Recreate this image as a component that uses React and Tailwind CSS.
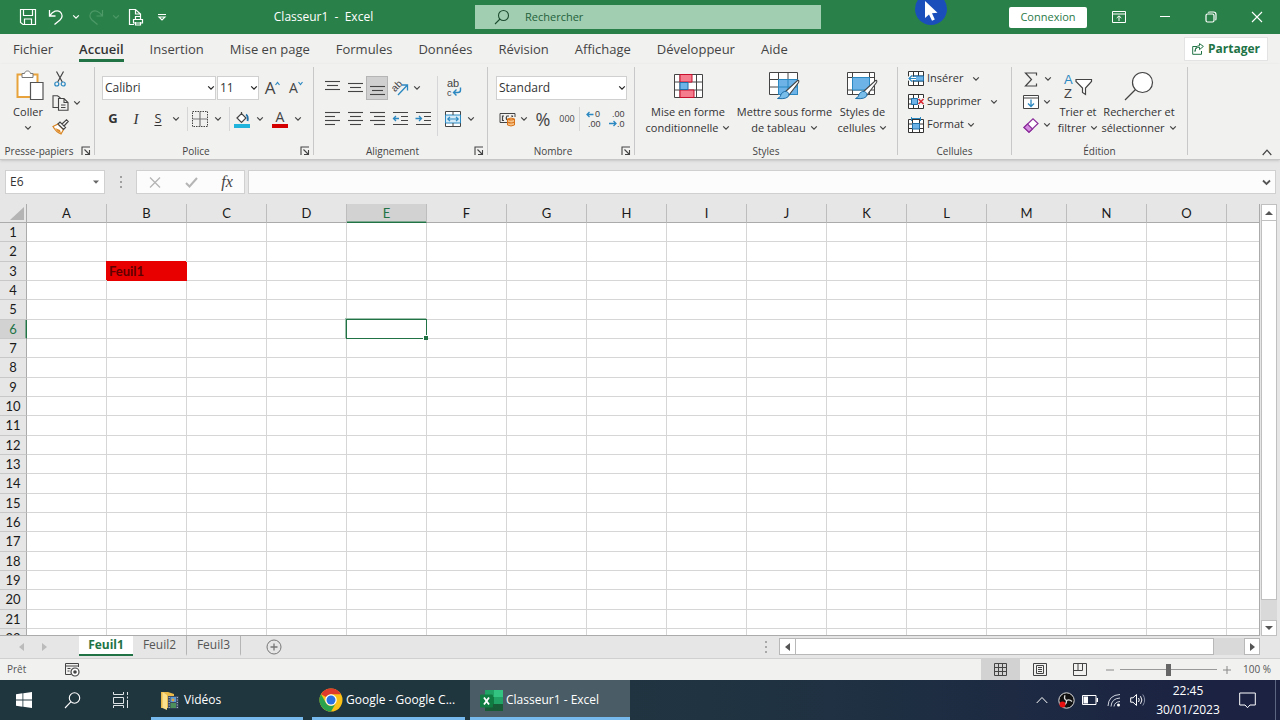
import React from "react";

const COLUMNS = ["A", "B", "C", "D", "E", "F", "G", "H", "I", "J", "K", "L", "M", "N", "O"];
const ROWS = Array.from({ length: 22 }, (_, i) => i + 1);
const TABS = ["Fichier", "Accueil", "Insertion", "Mise en page", "Formules", "Données", "Révision", "Affichage", "Développeur", "Aide"];

function Svg({ w = 20, h = 20, className = "", children }) {
  return (
    <svg width={w} height={h} viewBox={`0 0 ${w} ${h}`} fill="none" stroke="#444" className={`shrink-0 ${className}`} aria-hidden="true">
      {children}
    </svg>
  );
}

function Chevron({ color = "#444" }) {
  return (
    <Svg w={8} h={6}>
      <path d="M1.2 1.3L4 4.2L6.8 1.3" stroke={color} strokeWidth="1.2" />
    </Svg>
  );
}

function Tool({ label, className = "w-[22px]", children }) {
  return (
    <button type="button" aria-label={label} className={`flex h-6 shrink-0 items-center justify-center ${className}`}>
      {children}
    </button>
  );
}

function Drop({ label, className = "w-4" }) {
  return (
    <Tool label={label} className={className}>
      <Chevron />
    </Tool>
  );
}

function Select({ label, value, className }) {
  return (
    <div className={`relative h-6 shrink-0 ${className}`}>
      <select aria-label={label} className="block h-full w-full appearance-none border border-[#d0d0d0] bg-white pl-[2px] text-[12px] text-[#333] outline-none">
        <option>{value}</option>
      </select>
      <span className="pointer-events-none absolute inset-y-0 right-px flex items-center">
        <Chevron color="#222" />
      </span>
    </div>
  );
}

function Group({ label, launcher, className, children }) {
  return (
    <section className={`flex shrink-0 flex-col pt-[3px] pb-1 ${className}`}>
      <div className="flex flex-1 flex-col border-r border-[#c8c8c8]">
        <div className="flex flex-1">{children}</div>
        <div className="-mb-1 flex h-4 items-center">
          <h2 className="flex-1 text-center text-[10px] leading-4 font-normal whitespace-nowrap text-[#444]">{label}</h2>
          {launcher && (
            <button type="button" aria-label={`Options ${label}`} className="flex w-4 justify-center">
              <Svg w={10} h={10}>
                <path d="M1 9V1H9M3.5 3.5L8 8M8.5 4V8.5H4" strokeWidth="1.1" />
              </Svg>
            </button>
          )}
        </div>
      </div>
    </section>
  );
}

function BigButton({ lines, drop, className, children }) {
  return (
    <button type="button" className={`flex h-[72px] shrink-0 flex-col items-center text-[11px] leading-4 whitespace-nowrap text-[#333] ${className}`}>
      <span className="flex h-[37px] items-center">{children}</span>
      <span>{lines[0]}</span>
      <span className="flex h-4 items-center gap-1">
        {lines[1]}
        {drop && <Chevron />}
      </span>
    </button>
  );
}

const HLines = ({ rows }) => (
  <Svg w={16} h={16}>
    {rows.map(([y, x1, x2]) => (
      <path key={y} d={`M${x1} ${y}.5H${x2}`} strokeWidth="1.1" />
    ))}
  </Svg>
);

function TitleBar() {
  return (
    <header className="relative flex h-[34px] shrink-0 items-center bg-[#2a8049] text-white">
      <div className="flex flex-1 items-center pl-4">
        <Tool label="Enregistrer" className="w-6">
          <Svg w={18} h={18}>
            <path d="M1.5 1.5H16.5V16.5H4L1.5 14.5ZM4.5 1.5V7.5H13.5V1.5M5.5 16.5V11H12.5V16.5" stroke="#fff" strokeWidth="1.2" />
          </Svg>
        </Tool>
        <Tool label="Annuler" className="w-8">
          <Svg w={16} h={18}>
            <path d="M1.5 2V8H7.5M1.8 7.6C5 3.2 9.2 1.6 12 3.8C15 6.2 14.6 9.5 12 12L6.5 16.5" stroke="#fff" strokeWidth="1.3" />
          </Svg>
        </Tool>
        <button type="button" aria-label="Historique d'annulation" className="w-2"><Chevron color="#fff" /></button>
        <Tool label="Rétablir" className="w-8">
          <Svg w={16} h={18}>
            <path d="M14.5 2V8H8.5M14.2 7.6C11 3.2 6.8 1.6 4 3.8C1 6.2 1.4 9.5 4 12L9.5 16.5" stroke="#4d9968" strokeWidth="1.2" />
          </Svg>
        </Tool>
        <button type="button" aria-label="Historique de rétablissement" className="w-2"><Chevron color="#4d9968" /></button>
        <Tool label="Aperçu et impression" className="w-8">
          <Svg w={16} h={18}>
            <path d="M6 16.5H1.5V1.5H7.5L12.5 6V8M7.5 1.5V6H12.5M5.5 11.5H14.5V15H5.5ZM7.5 11.5V8.5H12.5V11.5M7.5 14V17H12.5V14" stroke="#fff" strokeWidth="1.2" />
          </Svg>
        </Tool>
        <Tool label="Personnaliser" className="w-5">
          <Svg w={10} h={8}>
            <path d="M1 1.5H9M2 4L5 7L8 4Z" stroke="#fff" strokeWidth="1.1" />
          </Svg>
        </Tool>
        <h1 className="flex-1 text-center text-[12px] font-normal whitespace-pre">Classeur1  -  Excel</h1>
      </div>
      <label className="flex h-6 w-[346px] items-center bg-[#a1ceb0]">
        <span className="flex w-[50px] justify-center pl-1">
          <Svg w={16} h={16}>
            <circle cx="9.5" cy="6.5" r="5" stroke="#1d4d30" strokeWidth="1.1" />
            <path d="M6 10L1 15" stroke="#1d4d30" strokeWidth="1.1" />
          </Svg>
        </span>
        <input aria-label="Rechercher" placeholder="Rechercher" className="min-w-0 flex-1 bg-transparent text-[11px] outline-none placeholder:text-[#24613c]" />
      </label>
      <div className="flex flex-1 items-center justify-end">
        <button type="button" className="mr-[9px] h-[21px] w-[78px] rounded-xs bg-white text-[11px] leading-5 text-[#2a7a48]">Connexion</button>
        <Tool label="Options du ruban" className="w-[46px]">
          <Svg w={14} h={12}>
            <path d="M.5 .5H13.5V11.5H.5ZM.5 3H13.5M7 10V5M4.7 7L7 4.8L9.3 7" stroke="#fff" />
          </Svg>
        </Tool>
        <Tool label="Réduire" className="w-[46px]">
          <Svg w={12} h={12}><path d="M1 5.5H11" stroke="#fff" /></Svg>
        </Tool>
        <Tool label="Niveau inférieur" className="w-[46px]">
          <Svg w={12} h={12}>
            <rect x="1" y="3" width="8" height="8" rx="1.5" stroke="#fff" strokeWidth="1.2" />
            <path d="M3 1.5C3.4 1 4 1 5 1H8.5C10.2 1 11 1.8 11 3.5V7.5C11 8.4 11 8.8 10.5 9.2" stroke="#fff" strokeWidth="1.2" />
          </Svg>
        </Tool>
        <Tool label="Fermer" className="w-[46px]">
          <Svg w={12} h={12}><path d="M1 1L11 11M11 1L1 11" stroke="#fff" strokeWidth="1.1" /></Svg>
        </Tool>
      </div>
      <svg width="34" height="26" viewBox="0 0 34 26" className="pointer-events-none absolute top-0 left-[914px]" aria-hidden="true">
        <circle cx="17" cy="9" r="16" fill="#1a4fbb" />
        <path d="M11 1V18L15 14.5L18 20.8L20.8 19.5L18 13.3L23.5 12.8Z" fill="#fff" />
      </svg>
    </header>
  );
}

function RibbonTabs() {
  return (
    <nav className="flex h-[30px] shrink-0 items-start justify-between bg-[#f1f1f0] pr-3">
      <div className="flex gap-[26px] pl-[13px]">
        {TABS.map((t) =>
          t === "Accueil" ? (
            <button key={t} type="button" className="h-7 border-b-[3px] border-[#217346] pt-[3px] text-[13px] leading-6 font-semibold text-[#333]">{t}</button>
          ) : (
            <button key={t} type="button" className="h-7 border-b-[3px] border-transparent pt-[3px] text-[13px] leading-6 whitespace-nowrap text-[#444]">{t}</button>
          )
        )}
      </div>
      <button type="button" className="mt-[3px] flex h-6 items-center gap-1 border border-[#e3e3e3] bg-white px-[7px] text-[12px] font-bold text-[#217346]">
        <Svg w={12} h={12}>
          <path d="M5 3.5H.7V11.3H9.5V8M3 8.5C3.3 5.5 5 4.2 7.5 4.2V6.6L11.4 3.4L7.5 .6V2.6C4.8 2.8 3.2 4.8 3 8.5Z" stroke="#217346" />
        </Svg>
        Partager
      </button>
    </nav>
  );
}

function Clipboard() {
  return (
    <Group label="Presse-papiers" launcher className="w-[95px]">
      <div className="flex pl-[7px]">
        <button type="button" className="flex h-[72px] w-[42px] flex-col items-center text-[11px] leading-4 text-[#333]">
          <span className="flex h-[37px] items-center pl-1">
            <Svg w={28} h={31}>
              <path d="M1.5 4.5H21.5V27H1.5Z" fill="#fff" stroke="#e8a33d" strokeWidth="2" />
              <path d="M6 3.5H8.5C9 1.6 10 1 11.5 1S14 1.6 14.5 3.5H17V7.5H6Z" fill="#fff" stroke="#777" />
              <path d="M14.5 12.5H27V29.5H14.5Z" fill="#fff" stroke="#555" strokeWidth="1.2" />
            </Svg>
          </span>
          <span>Coller</span>
          <span className="flex h-4 items-center"><Chevron /></span>
        </button>
        <div className="flex flex-col">
          <Tool label="Couper">
            <Svg w={12} h={16}>
              <path d="M2.5 .5L8.3 11M9.5 .5L3.7 11" strokeWidth="1.2" />
              <circle cx="2.8" cy="13" r="2" stroke="#2b88c0" strokeWidth="1.2" />
              <circle cx="9.2" cy="13" r="2" stroke="#2b88c0" strokeWidth="1.2" />
            </Svg>
          </Tool>
          <div className="flex">
            <Tool label="Copier">
              <Svg w={17} h={16}>
                <path d="M7 12.5H1V.8H5.5L8.5 3M6.5 3.5H12L16 7.5V15.3H6.5ZM12 3.5V7.5H16M9 10H13.5M9 12.5H13.5" strokeWidth="1.1" />
              </Svg>
            </Tool>
            <Drop label="Options de copie" className="w-3" />
          </div>
          <Tool label="Reproduire la mise en forme">
            <Svg w={17} h={16}>
              <path d="M1 7.5L6 5L11.5 10.5L9 15Q4 13 1 7.5Z" fill="#fff" stroke="#d88420" strokeWidth="1.2" />
              <path d="M3 9L8 11L9 14.5Q5 12.5 3 9Z" fill="#e08a25" stroke="none" />
              <path d="M6 5L8 3L13.5 8.5L11.5 10.5ZM10 5L14.5 .8L16.2 2.5L12 7" fill="#fff" strokeWidth="1.2" />
            </Svg>
          </Tool>
        </div>
      </div>
    </Group>
  );
}

function FontGroup() {
  return (
    <Group label="Police" launcher className="w-[219px]">
      <div className="flex flex-col gap-[7px] pt-[9px] pl-[7px]">
        <div className="flex">
          <Select label="Police" value="Calibri" className="mr-px w-[114px]" />
          <Select label="Taille de police" value="11" className="w-[42px]" />
          <Tool label="Augmenter la taille" className="w-[27px]">
            <span className="text-[17px] leading-5 text-[#444]">A</span>
            <Svg w={5} h={14}><path d="M.5 4L2.5 1.5L4.5 4" stroke="#2b88c0" strokeWidth="1.2" /></Svg>
          </Tool>
          <Tool label="Réduire la taille" className="w-[20px]">
            <span className="text-[14px] leading-5 text-[#444]">A</span>
            <Svg w={5} h={14}><path d="M.5 1L2.5 3.5L4.5 1" stroke="#2b88c0" strokeWidth="1.2" /></Svg>
          </Tool>
        </div>
        <div className="flex items-center text-[13px] text-[#333]">
          <Tool label="Gras"><b>G</b></Tool>
          <Tool label="Italique" className="w-6"><i className="font-['Liberation_Serif',serif] text-[15px]">I</i></Tool>
          <Tool label="Souligné" className="w-5"><span className="underline underline-offset-2">S</span></Tool>
          <Drop label="Options de soulignement" />
          <span className="mx-[2px] h-6 w-[2px] border-r border-[#d6d6d6]" />
          <Tool label="Bordures" className="w-5">
            <Svg w={16} h={16}>
              <path d="M.5 .5H15.5V15.5H.5Z" strokeDasharray="1.5 1" />
              <path d="M8 .5V15.5M.5 8H15.5" strokeWidth="1.2" stroke="#777" />
            </Svg>
          </Tool>
          <Drop label="Options de bordure" />
          <span className="mx-[2px] h-6 w-[2px] border-r border-[#d6d6d6]" />
          <Tool label="Couleur de remplissage" className="w-5">
            <Svg w={16} h={17}>
              <path d="M3 7L7.5 2.5L12 7L7.5 11.5ZM7.5 4V1" fill="#fff" strokeWidth="1.2" />
              <path d="M12 3.5Q14.5 5 13.5 10" stroke="#1f6fa8" strokeWidth="1.8" />
              <path d="M0 13H16V17H0Z" fill="#20b4dc" stroke="none" />
            </Svg>
          </Tool>
          <Drop label="Couleurs de remplissage" />
          <Tool label="Couleur de police" className="w-6 flex-col">
            <span className="text-[14px] leading-[14px] text-[#444]">A</span>
            <span className="h-1 w-4 bg-[#d40000]" />
          </Tool>
          <Drop label="Couleurs de police" className="w-3" />
        </div>
      </div>
    </Group>
  );
}

function AlignGroup() {
  return (
    <Group label="Alignement" launcher className="w-[174px]">
      <div className="flex pt-[9px] pl-[7px]">
        <div className="flex w-[115px] flex-col gap-[7px]">
          <div className="flex">
            <Tool label="Aligner en haut"><HLines rows={[[1, 1, 16], [5, 3, 14], [9, 1, 16]]} /></Tool>
            <Tool label="Aligner au centre" className="w-[23px]"><HLines rows={[[3, 1, 16], [7, 3, 14], [11, 1, 16]]} /></Tool>
            <Tool label="Aligner en bas" className="w-[22px] border border-[#b5b5b5] bg-[#d0d0d0]"><HLines rows={[[6, 1, 16], [10, 3, 14], [14, 1, 16]]} /></Tool>
            <Tool label="Orientation" className="w-6">
              <Svg w={20} h={20}>
                <text x="2" y="13" transform="rotate(-45 5 10)" fontFamily="Liberation Sans" fontSize="10" fill="#444" stroke="none">ab</text>
                <path d="M8 17L17 7.5M12 7H17.5V12.5" stroke="#2b88c0" strokeWidth="1.3" />
              </Svg>
            </Tool>
            <Drop label="Options d'orientation" className="w-[10px]" />
          </div>
          <div className="flex">
            <Tool label="Aligner à gauche"><HLines rows={[[1, 1, 16], [5, 1, 11], [9, 1, 16], [13, 1, 11]]} /></Tool>
            <Tool label="Centrer" className="w-[23px]"><HLines rows={[[1, 1, 16], [5, 3, 14], [9, 1, 16], [13, 3, 14]]} /></Tool>
            <Tool label="Aligner à droite"><HLines rows={[[1, 1, 16], [5, 5, 16], [9, 1, 16], [13, 5, 16]]} /></Tool>
            <Tool label="Diminuer le retrait" className="w-6">
              <Svg w={16} h={16}>
                <path d="M1 1.5H16M9 5.5H16M9 9.5H16M1 13.5H16" strokeWidth="1.1" />
                <path d="M1.5 7.5H7M4 5L1.5 7.5L4 10" stroke="#2b88c0" strokeWidth="1.3" />
              </Svg>
            </Tool>
            <Tool label="Augmenter le retrait" className="w-[22px]">
              <Svg w={16} h={16}>
                <path d="M1 1.5H16M9 5.5H16M9 9.5H16M1 13.5H16" strokeWidth="1.1" />
                <path d="M.5 7.5H6.5M4 5L6.5 7.5L4 10" stroke="#2b88c0" strokeWidth="1.3" />
              </Svg>
            </Tool>
          </div>
        </div>
        <span className="mr-1 h-[60px] w-[2px] border-r border-[#d6d6d6]" />
        <div className="flex flex-col gap-[7px]">
          <Tool label="Renvoyer à la ligne automatiquement" className="w-6">
            <Svg w={16} h={20}>
              <text x="1" y="9" fontFamily="Liberation Sans" fontSize="11" fill="#444" stroke="none">ab</text>
              <text x="1" y="18" fontFamily="Liberation Sans" fontSize="9" fill="#444" stroke="none">c</text>
              <path d="M14.5 9.5V12Q14.5 14.5 12 14.5H8M10.5 11.5L7.5 14.5L10.5 17.5" stroke="#2b88c0" strokeWidth="1.4" />
            </Svg>
          </Tool>
          <div className="flex">
            <Tool label="Fusionner et centrer">
              <Svg w={16} h={16}>
                <path d="M.5 .5H15.5V15.5H.5Z" fill="#fff" />
                <path d="M.5 4H15.5V12H.5Z" fill="#d5ecf8" stroke="#2b88c0" />
                <path d="M8 .5V4M8 12V15.5" />
                <path d="M3 8H13M5 5.8L2.8 8L5 10.2M11 5.8L13.2 8L11 10.2" stroke="#2b88c0" strokeWidth="1.2" />
              </Svg>
            </Tool>
            <Drop label="Options de fusion" className="w-[14px]" />
          </div>
        </div>
      </div>
    </Group>
  );
}

function NumberGroup() {
  return (
    <Group label="Nombre" launcher className="w-[147px]">
      <div className="flex flex-col gap-[7px] pt-[9px] pl-2">
        <Select label="Format de nombre" value="Standard" className="w-[131px]" />
        <div className="flex items-center text-[#444]">
          <Tool label="Format comptable">
            <Svg w={17} h={16}>
              <path d="M8 11.5H1V2.5H16V6" />
              <path d="M5 5H3.5V9.5H5M10 5H8Q6.5 7 8 9M12 5H13.5V6" strokeWidth="1.2" />
              <path d="M8.5 8V14Q12 16 15.5 14V8Q12 6 8.5 8Z" fill="#f6c489" stroke="#d9731a" />
              <path d="M8.5 8Q12 10 15.5 8M8.5 11Q12 13 15.5 11" stroke="#d9731a" strokeWidth="1.2" />
            </Svg>
          </Tool>
          <Drop label="Devises" className="w-3" />
          <Tool label="Style de pourcentage" className="w-[26px] text-[18px]">%</Tool>
          <Tool label="Style de milliers" className="w-[22px] text-[9px]">000</Tool>
          <span className="mr-[2px] h-6 w-[2px] border-r border-[#d6d6d6]" />
          <Tool label="Ajouter une décimale" className="w-6">
            <Svg w={18} h={20}>
              <text x="10" y="8" fontFamily="Liberation Sans" fontSize="9" fill="#444" stroke="none">0</text>
              <text x="3" y="18" fontFamily="Liberation Sans" fontSize="9" fill="#444" stroke="none">.00</text>
              <path d="M2 5.5H8.5M4.5 3L2 5.5L4.5 8" stroke="#2b88c0" strokeWidth="1.3" />
            </Svg>
          </Tool>
          <Tool label="Réduire les décimales">
            <Svg w={18} h={20}>
              <text x="4" y="8" fontFamily="Liberation Sans" fontSize="9" fill="#444" stroke="none">.00</text>
              <text x="9" y="18" fontFamily="Liberation Sans" fontSize="9" fill="#444" stroke="none">.0</text>
              <path d="M1 14.5H8M5.5 12L8 14.5L5.5 17" stroke="#2b88c0" strokeWidth="1.3" />
            </Svg>
          </Tool>
        </div>
      </div>
    </Group>
  );
}

const Brush = () => (
  <>
    <path d="M28.5 8.5Q30.5 8 29.5 10.5L20 23L16 20Z" fill="#fff" strokeWidth="1.1" />
    <path d="M15.5 19.5Q19.5 19 20 23Q19 27.5 8.5 26.5Q12 25 12 22.5Q13 20 15.5 19.5Z" fill="#79bdea" stroke="#1f6fa8" />
  </>
);

function StylesGroup() {
  return (
    <Group label="Styles" className="w-[263px]">
      <div className="flex pl-2">
        <BigButton lines={["Mise en forme", "conditionnelle"]} drop className="w-[90px]">
          <Svg w={29} h={24}>
            <path d="M.5 .5H28.5V23.5H.5ZM6 .5V23.5M22.5 .5V23.5M.5 8H28.5M.5 16H28.5" fill="#fff" />
            <path d="M6 .5H18V8H6ZM6 16H20V23.5H6Z" fill="#f47c8c" stroke="#c8102e" />
            <path d="M6 8.5H14V15.5H6Z" fill="#6db3e8" stroke="#1f6fa8" />
          </Svg>
        </BigButton>
        <BigButton lines={["Mettre sous forme", "de tableau"]} drop className="w-[103px]">
          <Svg w={31} h={28}>
            <path d="M.5 .5H28.5V22.5H.5ZM.5 7.5H28.5M.5 15H28.5M9.5 .5V22.5M19 .5V22.5" fill="#fff" />
            <path d="M9.5 7.5H28.5V22.5H9.5Z" fill="#6db3e8" stroke="#2b88c0" />
            <path d="M19 7.5V22.5M9.5 15H28.5" stroke="#2b88c0" />
            <Brush />
          </Svg>
        </BigButton>
        <BigButton lines={["Styles de", "cellules"]} drop className="w-[53px]">
          <Svg w={31} h={28}>
            <path d="M.5 .5H27.5V22.5H.5ZM.5 5.5H27.5M5.5 .5V22.5M22.5 .5V22.5M.5 18H27.5" fill="#fff" />
            <path d="M5.5 5.5H22.5V18H5.5Z" fill="#6db3e8" stroke="#2b88c0" />
            <Brush />
          </Svg>
        </BigButton>
      </div>
    </Group>
  );
}

const MiniGrid = () => <path d="M.5 .5H15.5V14.5H.5ZM.5 5H15.5M.5 10H15.5M5.5 .5V14.5M10.5 .5V14.5" fill="#fff" stroke="#333" />;

function CellsGroup() {
  return (
    <Group label="Cellules" className="w-[114px]">
      <div className="flex flex-col pl-[10px] text-[11px] text-[#333]">
        <button type="button" className="flex h-[23px] items-center gap-[3px]">
          <Svg w={16} h={15}>
            <MiniGrid />
            <path d="M5.5 5H15.5V10H5.5Z" fill="#6db3e8" stroke="#1f6fa8" />
            <path d="M0 7.5H8M3.5 4L.8 7.5L3.5 11" stroke="#fff" strokeWidth="3" />
            <path d="M1 7.5H8M4 4.5L1 7.5L4 10.5" stroke="#2b88c0" strokeWidth="1.2" />
          </Svg>
          Insérer
          <span className="ml-[6px]"><Chevron /></span>
        </button>
        <button type="button" className="flex h-[23px] items-center gap-[3px]">
          <Svg w={16} h={15}>
            <MiniGrid />
            <path d="M9 4H16V11H9Z" fill="#f1f1f0" stroke="none" />
            <path d="M3.5 4.5H9.5V10.5H3.5Z" fill="#6db3e8" stroke="#1f6fa8" />
            <path d="M10.5 5L15.5 10M15.5 5L10.5 10" stroke="#d9232e" strokeWidth="1.5" />
          </Svg>
          Supprimer
          <span className="ml-[6px]"><Chevron /></span>
        </button>
        <button type="button" className="flex h-[23px] items-center gap-[3px]">
          <Svg w={16} h={16}>
            <path d="M.5 2.5H15.5V15.5H.5ZM.5 7H15.5M.5 11.5H15.5M4.5 2.5V15.5M11.5 2.5V15.5" fill="#fff" stroke="#333" />
            <path d="M4.5 6.5H11.5V12H4.5Z" fill="#6db3e8" stroke="#1f6fa8" />
            <path d="M3.5 1.5H12.5M3.5 0V4M12.5 0V4" stroke="#2b88c0" />
          </Svg>
          Format
          <Chevron />
        </button>
      </div>
    </Group>
  );
}

function EditGroup() {
  return (
    <Group label="Édition" className="w-[176px]">
      <div className="flex pl-2">
        <div className="flex flex-col">
          <div className="flex h-[23px]">
            <Tool label="Somme automatique">
              <Svg w={14} h={15}><path d="M12.5 3.5V1H1.5L7.5 7.5L1.5 14H12.5V11.5" strokeWidth="1.2" /></Svg>
            </Tool>
            <Drop label="Autres fonctions" className="w-3" />
          </div>
          <div className="flex h-[23px]">
            <Tool label="Remplissage">
              <Svg w={16} h={14}>
                <path d="M.5 .5H15.5V13.5H.5ZM.5 3H15.5" fill="#fff" />
                <path d="M8 4.5V11.5M5 8.5L8 11.5L11 8.5" stroke="#2b88c0" strokeWidth="1.3" />
              </Svg>
            </Tool>
            <Drop label="Options de remplissage" className="w-[10px]" />
          </div>
          <div className="flex h-[23px]">
            <Tool label="Effacer">
              <Svg w={16} h={15}>
                <path d="M1 9.5L10 .8L15 5.5L6 14.2Z" fill="#fff" stroke="#8c2e9b" strokeWidth="1.2" />
                <path d="M1 9.5L4.5 6L9.5 11L6 14.2Z" fill="#d58be0" stroke="#8c2e9b" strokeWidth="1.2" />
              </Svg>
            </Tool>
            <Drop label="Options d'effacement" className="w-[10px]" />
          </div>
        </div>
        <BigButton lines={["Trier et", "filtrer"]} drop className="w-[48px]">
          <Svg w={30} h={30}>
            <text x="1" y="13" fontFamily="Liberation Sans" fontSize="13" fill="#2b88c0" stroke="none">A</text>
            <text x="1" y="27" fontFamily="Liberation Sans" fontSize="13" fill="#444" stroke="none">Z</text>
            <path d="M13 8.5H28.5V10.5L22.5 17V23.5L19.5 21.5V17L13 10.5Z" fill="#fff" strokeWidth="1.2" />
          </Svg>
        </BigButton>
        <BigButton lines={["Rechercher et", "sélectionner"]} drop className="w-[74px]">
          <Svg w={30} h={30}>
            <circle cx="18.5" cy="11.5" r="10" fill="#fff" strokeWidth="1.2" />
            <path d="M11.5 18.5L1 29" strokeWidth="1.3" />
          </Svg>
        </BigButton>
      </div>
    </Group>
  );
}

function Ribbon() {
  return (
    <div className="relative flex h-24 shrink-0 border-b border-[#c6c6c6] bg-[#f1f1f0] shadow-sm">
      <Clipboard />
      <FontGroup />
      <AlignGroup />
      <NumberGroup />
      <StylesGroup />
      <CellsGroup />
      <EditGroup />
      <div className="flex flex-1 items-end justify-end pr-2 pb-[3px]">
        <button type="button" aria-label="Réduire le ruban">
          <Svg w={10} h={7}><path d="M.7 6L5 1.2L9.3 6" strokeWidth="1.2" /></Svg>
        </button>
      </div>
    </div>
  );
}

function FormulaBar() {
  return (
    <div className="flex h-11 shrink-0 items-center bg-[#e6e6e6] pr-1 pl-[5px]">
      <div className="flex h-6 w-[100px] items-center border border-[#d0d0d0] bg-white">
        <input aria-label="Zone Nom" defaultValue="E6" className="min-w-0 flex-1 bg-transparent pl-1 text-[12px] text-[#333] outline-none" />
        <button type="button" aria-label="Liste des noms" className="flex w-4 justify-center">
          <Svg w={6} h={4}><path d="M0 .5H6L3 3.8Z" fill="#666" stroke="none" /></Svg>
        </button>
      </div>
      <span className="flex w-[31px] justify-center">
        <Svg w={2} h={12}><path d="M0 1H2M0 6H2M0 11H2" stroke="#a0a0a0" strokeWidth="2" /></Svg>
      </span>
      <div className="mr-[3px] flex h-6 w-[109px] items-center border border-[#d0d0d0] bg-[#fcfcfc]">
        <Tool label="Annuler la saisie" className="w-9">
          <Svg w={12} h={11}><path d="M1 .5L11 10.5M11 .5L1 10.5" stroke="#b5b5b5" strokeWidth="1.3" /></Svg>
        </Tool>
        <Tool label="Entrer" className="w-9">
          <Svg w={13} h={11}><path d="M1 6L4.5 9.5L12 1" stroke="#b5b5b5" strokeWidth="2" /></Svg>
        </Tool>
        <Tool label="Insérer une fonction" className="w-9">
          <i className="font-['Liberation_Serif',serif] text-[16px] text-[#444]">fx</i>
        </Tool>
      </div>
      <div className="flex h-6 flex-1 items-center border border-[#d0d0d0] bg-[#fcfcfc]">
        <input aria-label="Barre de formule" className="min-w-0 flex-1 bg-transparent px-1 text-[12px] outline-none" />
        <button type="button" aria-label="Développer la barre de formule" className="w-[17px] pl-1">
          <Svg w={9} h={7}><path d="M1 1.5L4.5 5L8 1.5" stroke="#555" strokeWidth="1.8" /></Svg>
        </button>
      </div>
    </div>
  );
}

function Cell({ col, row }) {
  if (col === "B" && row === 3) {
    return <td className="relative border-r border-b border-[#e80000] bg-[#e80000] p-0 pl-[2px] text-[13px] leading-none font-bold text-[#600000] shadow-[-1px_-1px_0_#e80000]">Feuil1</td>;
  }
  if (col === "E" && row === 6) {
    return (
      <td className="relative border-r border-b border-[#d6d6d6] p-0">
        <span className="absolute -inset-px border border-[#217346] shadow-[-1px_-1px_0_#9dc0ac]" />
        <span className="absolute -right-[2px] -bottom-[2px] h-[5px] w-[5px] border-t border-l border-white bg-[#217346]" />
      </td>
    );
  }
  return <td className="border-r border-b border-[#d6d6d6] p-0" />;
}

function Sheet() {
  return (
    <main className="flex min-h-0 flex-1 bg-[#e6e6e6]">
      <div className="min-w-0 flex-1 overflow-hidden border-r border-b border-[#ababab] bg-white">
        <table className="w-full table-fixed border-separate border-spacing-0 font-['Lato','Liberation_Sans',sans-serif] text-[13px] leading-none text-[#1a1a1a]">
          <colgroup>
            <col className="w-[27px]" />
            {COLUMNS.map((c) => <col key={c} className="w-20" />)}
            <col />
          </colgroup>
          <thead>
            <tr className="h-[19px] bg-[#e6e6e6]">
              <th className="border-r border-b border-[#ababab] p-0">
                <Svg w={14} h={13} className="ml-[10px]"><path d="M14 0V13H0Z" fill="#b4b4b4" stroke="none" /></Svg>
              </th>
              {COLUMNS.map((c) =>
                c === "E" ? (
                  <th key={c} scope="col" className="border-r border-b border-r-[#bdbdbd] border-b-[#217346] bg-[#d2d2d2] p-0 font-normal text-[#217346] shadow-[inset_0_-1px_0_#7fa991]">{c}</th>
                ) : (
                  <th key={c} scope="col" className="border-r border-b border-r-[#bdbdbd] border-b-[#ababab] p-0 font-normal">{c}</th>
                )
              )}
              <th className="border-b border-[#ababab] p-0" />
            </tr>
          </thead>
          <tbody>
            {ROWS.map((r) => (
              <tr key={r} className={r % 3 === 2 ? "h-5" : "h-[19px]"}>
                {r === 6 ? (
                  <th scope="row" className="border-r border-b border-r-[#217346] border-b-[#c8c8c8] bg-[#d2d2d2] p-0 font-normal text-[#217346] shadow-[inset_-1px_0_0_#7fa991]">{r}</th>
                ) : (
                  <th scope="row" className="border-r border-b border-r-[#ababab] border-b-[#c8c8c8] bg-[#e6e6e6] p-0 font-normal">{r}</th>
                )}
                {COLUMNS.map((c) => <Cell key={c} col={c} row={r} />)}
                <td className="border-b border-[#d6d6d6] p-0" />
              </tr>
            ))}
          </tbody>
        </table>
      </div>
      <div className="flex w-5 flex-col pr-[3px] pl-px">
        <button type="button" aria-label="Défiler vers le haut" className="flex h-[17px] items-center justify-center border border-[#c0c0c0] bg-white">
          <Svg w={8} h={4}><path d="M0 4L4 0L8 4Z" fill="#555" stroke="none" /></Svg>
        </button>
        <div className="flex flex-1 flex-col bg-[#d9d9d9] pb-5">
          <div className="flex-1 border border-t-0 border-[#c0c0c0] bg-white" />
        </div>
        <button type="button" aria-label="Défiler vers le bas" className="flex h-4 items-center justify-center border border-[#c0c0c0] bg-white">
          <Svg w={8} h={4}><path d="M0 0L4 4L8 0Z" fill="#555" stroke="none" /></Svg>
        </button>
      </div>
    </main>
  );
}

function SheetTabs() {
  return (
    <div className="flex h-[23px] shrink-0 items-start border-b border-[#d0d0d0] bg-[#e6e6e6] text-[12px] text-[#555]">
      <div className="flex h-full w-[79px] items-center gap-4 pl-[19px]">
        <button type="button" aria-label="Feuille précédente"><Svg w={6} h={8}><path d="M5 0V8L0 4Z" fill="#bbb" stroke="none" /></Svg></button>
        <button type="button" aria-label="Feuille suivante"><Svg w={6} h={8}><path d="M1 0V8L6 4Z" fill="#bbb" stroke="none" /></Svg></button>
      </div>
      <button type="button" className="h-5 w-[54px] border-b-2 border-[#217346] bg-white leading-[18px] font-bold text-[#217346]">Feuil1</button>
      <button type="button" className="h-5 w-[54px] border-r border-b-2 border-r-[#b5b5b5] border-b-transparent leading-[18px]">Feuil2</button>
      <button type="button" className="h-5 w-[54px] border-r border-b-2 border-r-[#b5b5b5] border-b-transparent leading-[18px]">Feuil3</button>
      <button type="button" aria-label="Nouvelle feuille" className="ml-[25px] flex h-full items-center">
        <Svg w={16} h={16}>
          <circle cx="8" cy="8" r="7" stroke="#777" />
          <path d="M8 4.5V11.5M4.5 8H11.5" stroke="#777" strokeWidth="1.3" />
        </Svg>
      </button>
      <div className="flex h-full flex-1 items-center justify-end pr-3">
        <Svg w={2} h={12}><path d="M0 1H2M0 6H2M0 11H2" stroke="#a8a8a8" strokeWidth="2" /></Svg>
      </div>
      <div className="mt-[2px] mr-5 flex h-[17px] w-[481px]">
        <button type="button" aria-label="Défiler à gauche" className="flex w-[17px] items-center justify-center border border-[#b8b8b8] bg-white">
          <Svg w={5} h={8}><path d="M5 0V8L0 4Z" fill="#555" stroke="none" /></Svg>
        </button>
        <div className="flex flex-1 bg-[#d9d9d9] pr-[30px]">
          <div className="flex-1 border border-l-0 border-[#b8b8b8] bg-white" />
        </div>
        <button type="button" aria-label="Défiler à droite" className="flex w-4 items-center justify-center border border-[#b8b8b8] bg-white">
          <Svg w={5} h={8}><path d="M0 0V8L5 4Z" fill="#555" stroke="none" /></Svg>
        </button>
      </div>
    </div>
  );
}

function StatusBar() {
  return (
    <div className="flex h-[21px] shrink-0 items-center bg-[#f1f1f0] text-[10px] text-[#555]">
      <span className="w-[65px] pl-[7px]">Prêt</span>
      <button type="button" aria-label="Enregistrer une macro">
        <Svg w={15} h={14}>
          <path d="M6 11.5H.5V.5H13.5V4M.5 3H13.5M2.5 5.5H5.5M2.5 8H4.5" />
          <circle cx="10" cy="9" r="4" fill="#fff" strokeWidth="1.2" />
          <circle cx="10" cy="9" r="1.8" fill="#444" stroke="none" />
        </Svg>
      </button>
      <span className="flex-1" />
      <button type="button" aria-label="Normal" className="flex h-full w-[39px] items-center justify-center bg-[#d2d2d2]">
        <Svg w={13} h={13}><path d="M.5 .5H12.5V12.5H.5ZM.5 4.5H12.5M.5 8.5H12.5M4.5 .5V12.5M8.5 .5V12.5" /></Svg>
      </button>
      <button type="button" aria-label="Mise en page" className="flex h-full w-10 items-center justify-center">
        <Svg w={14} h={13}><path d="M.5 .5H13.5V12.5H.5ZM3.5 2.5H10.5V10.5H3.5ZM5 4.5H9M5 6.5H9M5 8.5H9" /></Svg>
      </button>
      <button type="button" aria-label="Aperçu des sauts de page" className="flex h-full w-10 items-center justify-center">
        <Svg w={14} h={13}><path d="M.5 .5H13.5V12.5H.5ZM.5 7.5H9.5V.5M5 .5V7.5" /></Svg>
      </button>
      <button type="button" aria-label="Zoom arrière" className="ml-[6px] w-[14px]"><Svg w={8} h={8}><path d="M0 4H8" stroke="#888" /></Svg></button>
      <input
        type="range"
        aria-label="Zoom"
        defaultValue="50"
        className="h-3 w-[97px] appearance-none bg-[linear-gradient(#999,#999)] bg-[length:100%_1px] bg-center bg-no-repeat [&::-webkit-slider-thumb]:h-3 [&::-webkit-slider-thumb]:w-[5px] [&::-webkit-slider-thumb]:appearance-none [&::-webkit-slider-thumb]:bg-[#666]"
      />
      <button type="button" aria-label="Zoom avant" className="ml-[6px] w-5"><Svg w={8} h={8}><path d="M0 4H8M4 0V8" stroke="#888" /></Svg></button>
      <span className="w-[37px] whitespace-nowrap">100 %</span>
    </div>
  );
}

function Taskbar() {
  return (
    <footer className="flex h-10 shrink-0 bg-linear-to-r from-[#20363f] from-40% via-[#1f3142] via-65% to-[#1b2242] to-95% text-[12px] text-white">
      <button type="button" aria-label="Démarrer" className="flex w-12 items-center justify-center">
        <Svg w={16} h={16}><path d="M0 2.3L6.5 1.3V7.6H0ZM7.3 1.2L16 0V7.6H7.3ZM0 8.4H6.5V14.7L0 13.7ZM7.3 8.4H16V16L7.3 14.8Z" fill="#fff" stroke="none" /></Svg>
      </button>
      <button type="button" aria-label="Rechercher" className="flex w-12 items-center justify-center">
        <Svg w={17} h={17}>
          <circle cx="10.5" cy="6" r="5.2" stroke="#fff" strokeWidth="1.1" />
          <path d="M6.8 9.8L1 16" stroke="#fff" strokeWidth="1.1" />
        </Svg>
      </button>
      <button type="button" aria-label="Affichage des tâches" className="mr-[7px] flex w-12 items-center justify-center">
        <Svg w={17} h={16}>
          <path d="M1.5 0V2.5H11.5V0M1.5 5.5H11.5V11.5H1.5ZM1.5 16V13.5H11.5V16M15.5 0V3M15.5 4.5V6.5M15.5 8V16" stroke="#dfe4e6" />
        </Svg>
      </button>
      <button type="button" className="mr-[9px] flex w-[152px] items-center gap-[5px] border-b-[3px] border-[#76b9ed] pt-[3px] pl-[10px]">
        <Svg w={18} h={19}>
          <path d="M0 1H7L13 3V17H0Z" fill="#e9b949" stroke="none" />
          <path d="M1.5 1L6 4V19L1.5 17Z" fill="#fbe08e" stroke="none" />
          <path d="M7 5H17.5V17.5H7Z" fill="#3a4a63" stroke="none" />
          <path d="M9.5 6H15V11H9.5Z" fill="#5b9bd5" stroke="none" />
          <path d="M9.5 12H15V17H9.5Z" fill="#4d8f5c" stroke="none" />
          <path d="M8.2 6V17.5M16.3 6V17.5" stroke="#c7cfda" strokeDasharray="1 1.5" />
          <circle cx="12" cy="9" r="1.4" fill="#e2a13a" stroke="none" />
        </Svg>
        Vidéos
      </button>
      <button type="button" className="mr-[5px] flex w-[153px] items-center gap-[3px] border-b-[3px] border-[#76b9ed] pt-[3px] pl-[7px] whitespace-nowrap">
        <Svg w={24} h={24}>
          <circle cx="12" cy="12" r="11.5" fill="#fbc116" stroke="none" />
          <path d="M2.04 6.25A11.5 11.5 0 0 1 21.96 6.25H12A5.75 5.75 0 0 0 7 9.1Z" fill="#df3a2c" stroke="none" />
          <path d="M2.04 6.25A11.5 11.5 0 0 0 12 23.5L17 14.9A5.75 5.75 0 0 1 7 14.9Z" fill="#2ba24c" stroke="none" />
          <circle cx="12" cy="12" r="5.75" fill="#fff" stroke="none" />
          <circle cx="12" cy="12" r="4.5" fill="#2b71e2" stroke="none" />
        </Svg>
        Google - Google C...
      </button>
      <button type="button" className="flex w-40 items-center gap-[3px] border-b-[3px] border-[#76b9ed] bg-[#4a5c65] pt-[3px] pl-[10px] whitespace-nowrap">
        <Svg w={23} h={21}>
          <path d="M5 0H14V7H5Z" fill="#21a366" stroke="none" />
          <path d="M14 0H23V7H14Z" fill="#33c481" stroke="none" />
          <path d="M5 7H14V14H5Z" fill="#107c41" stroke="none" />
          <path d="M14 7H23V14H14Z" fill="#21a366" stroke="none" />
          <path d="M5 14H23V21H5Z" fill="#185c37" stroke="none" />
          <rect x="0" y="4.5" width="13" height="13" rx="1" fill="#107c41" stroke="none" />
          <path d="M4 7.5L9 14.5M9 7.5L4 14.5" stroke="#fff" strokeWidth="1.8" />
        </Svg>
        Classeur1 - Excel
      </button>
      <span className="flex-1" />
      <button type="button" aria-label="Icônes cachées" className="flex w-6 items-center justify-center">
        <Svg w={12} h={8}><path d="M.7 7L6 1.5L11.3 7" stroke="#fff" /></Svg>
      </button>
      <button type="button" aria-label="OBS" className="flex w-6 items-center justify-center">
        <Svg w={17} h={17}>
          <circle cx="8.5" cy="8.5" r="7.7" fill="#111" stroke="#ddd" />
          <path d="M8.5 8.5Q5.5 7 7 3.2M8.5 8.5Q11.3 6.8 14 9.5M8.5 8.5Q8.8 11.8 5.5 13.2" stroke="#ddd" strokeWidth="1.3" />
          <circle cx="4.5" cy="12.5" r="3" fill="#e81010" stroke="none" />
        </Svg>
      </button>
      <button type="button" aria-label="Batterie" className="flex w-6 items-center justify-center">
        <Svg w={16} h={10}>
          <path d="M.5 .5H14V9.5H.5Z" stroke="#fff" />
          <path d="M1.5 1.5H6V8.5H1.5ZM14.5 3H16V7H14.5Z" fill="#fff" stroke="none" />
        </Svg>
      </button>
      <button type="button" aria-label="Réseau" className="flex w-6 items-center justify-center">
        <Svg w={14} h={14}>
          <path d="M1 13Q1.5 2 13 1.5M4 13.5Q4.5 5.5 13 5M7 13.5Q7.5 9 13 8.5" stroke="#cfd4de" />
          <circle cx="11.5" cy="12" r="1.5" fill="#fff" stroke="none" />
        </Svg>
      </button>
      <button type="button" aria-label="Volume" className="flex w-6 items-center justify-center">
        <Svg w={16} h={14}>
          <path d="M.7 4.8H3L6.5 1.5V12.5L3 9.2H.7Z" stroke="#fff" />
          <path d="M8.5 5Q10 7 8.5 9M10.5 3.2Q13.3 7 10.5 10.8" stroke="#fff" />
          <path d="M12.8 1.5Q16.5 7 12.8 12.5" stroke="#8890a5" />
        </Svg>
      </button>
      <button type="button" className="flex w-[76px] flex-col items-center justify-center leading-[19px]">
        <span>22:45</span>
        <span>30/01/2023</span>
      </button>
      <button type="button" aria-label="Notifications" className="flex w-[42px] items-center justify-center">
        <Svg w={17} h={17}><path d="M.7 1H16.3V13H11L8.5 15.7L6 13H.7Z" stroke="#fff" /></Svg>
      </button>
      <button type="button" aria-label="Afficher le bureau" className="ml-[7px] w-[5px] border-l border-[#5d6680]" />
    </footer>
  );
}

export default function App() {
  return (
    <div className="flex h-screen flex-col overflow-hidden bg-white font-['Open_Sans','Noto_Sans',sans-serif]">
      <TitleBar />
      <RibbonTabs />
      <Ribbon />
      <FormulaBar />
      <Sheet />
      <SheetTabs />
      <StatusBar />
      <Taskbar />
    </div>
  );
}
